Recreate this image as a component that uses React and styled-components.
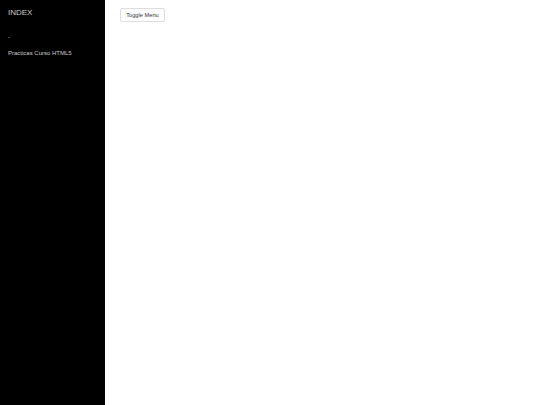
import React from 'react'
import styled, { createGlobalStyle } from 'styled-components'

const Global = createGlobalStyle`
    html, body { margin: 0; height: 100%; }
    body { font-family: "Liberation Sans", Arial, sans-serif; background: #fff; }
    #root { height: 100%; }
`

const Wrapper = styled.div`
    display: flex;
    height: 405px;
`

const Sidebar = styled.nav`
    width: 105px;
    background-color: #000;
    padding: 8px 8px;
    box-sizing: border-box;
`

const Brand = styled.div`
    font-size: 8px;
    line-height: 10px;
    color: #ccc;
    margin-bottom: 15px;
`

const MenuItem = styled.div`
    font-size: 6px;
    line-height: 8px;
    color: #ccc;
    margin-bottom: ${p => p.gap || 0}px;
`

const Content = styled.main`
    flex: 1;
    padding: 8px 15px;
`

const ToggleButton = styled.button`
    display: block;
    font-family: "Liberation Sans", Arial, sans-serif;
    font-size: 5.7px;
    color: #333;
    background: #fff;
    border: 1px solid #ddd;
    border-radius: 2px;
    height: 14px;
    width: 45px;
    padding: 0;
`

const App = () => {
    return (
        <Wrapper>
            <Global />
            <Sidebar>
                <Brand>INDEX</Brand>
                <MenuItem gap={8}>-</MenuItem>
                <MenuItem>Practicas Curso HTML5</MenuItem>
            </Sidebar>
            <Content>
                <ToggleButton>Toggle Menu</ToggleButton>
            </Content>
        </Wrapper>
    )
}

export default App
